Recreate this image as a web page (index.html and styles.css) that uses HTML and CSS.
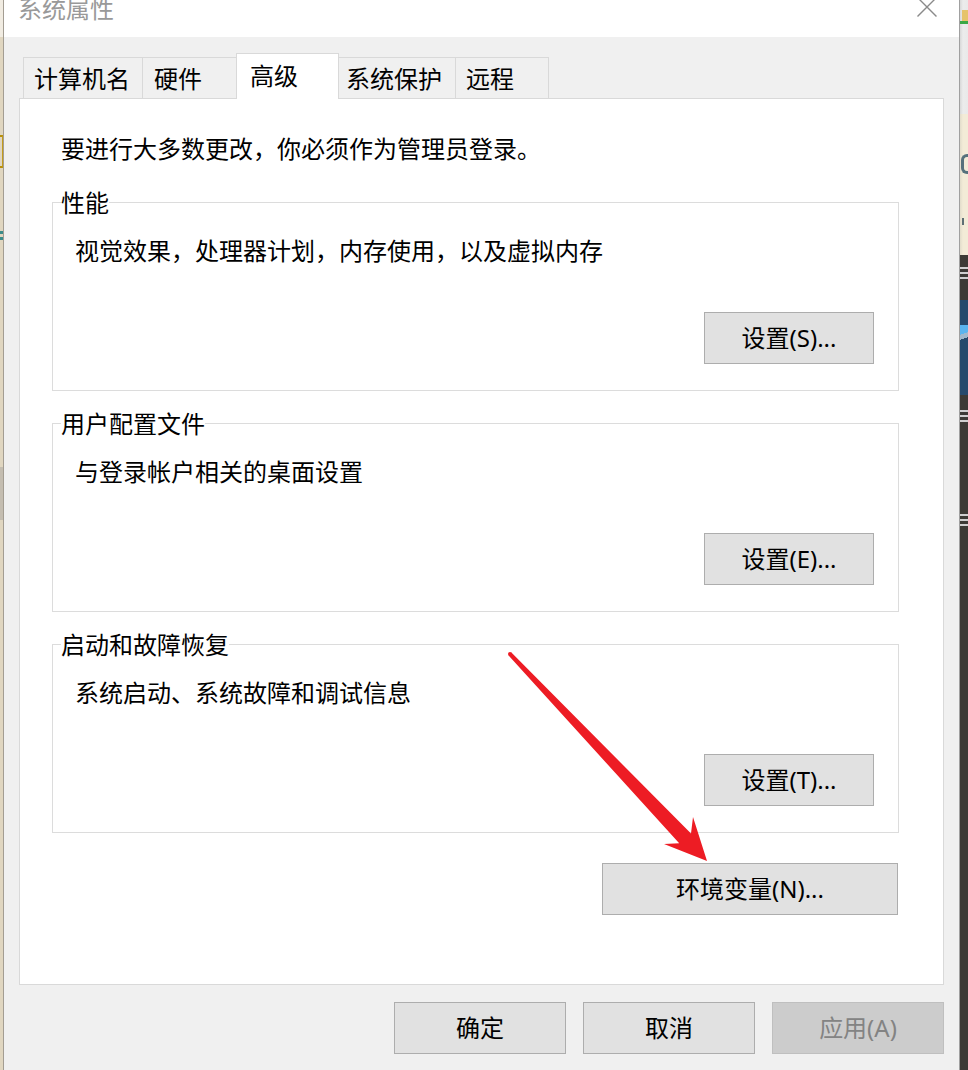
FILE: index.html
```html
<!DOCTYPE html>
<html lang="zh-CN">
<head>
<meta charset="utf-8">
<title>系统属性</title>
<link rel="stylesheet" href="styles.css">
</head>
<body>
<div class="screen">
  <div class="desk-left">
    <span class="mark mark-yellow"></span>
    <span class="mark mark-teal"></span>
    <span class="mark mark-gray"></span>
  </div>

  <div class="dialog">
    <div class="titlebar">
      <span class="title">系统属性</span>
      <svg class="close" viewBox="0 0 20 20" aria-hidden="true">
        <path d="M0.5 0.5 L19.5 19.5 M19.5 0.5 L0.5 19.5" stroke="#8a8a8a" stroke-width="1.4" fill="none"/>
      </svg>
    </div>

    <div class="body">
      <div class="tabs">
        <div class="tab tab-1">计算机名</div>
        <div class="tab tab-2">硬件</div>
        <div class="tab tab-active">高级</div>
        <div class="tab tab-4">系统保护</div>
        <div class="tab tab-5">远程</div>
      </div>

      <div class="panel">
        <p class="note">要进行大多数更改，你必须作为管理员登录。</p>

        <fieldset class="group">
          <legend>性能</legend>
          <div class="group-body">
            <p>视觉效果，处理器计划，内存使用，以及虚拟内存</p>
            <button class="btn">设置(S)...</button>
          </div>
        </fieldset>

        <fieldset class="group">
          <legend>用户配置文件</legend>
          <div class="group-body">
            <p>与登录帐户相关的桌面设置</p>
            <button class="btn">设置(E)...</button>
          </div>
        </fieldset>

        <fieldset class="group">
          <legend>启动和故障恢复</legend>
          <div class="group-body">
            <p>系统启动、系统故障和调试信息</p>
            <button class="btn">设置(T)...</button>
          </div>
        </fieldset>

        <button class="btn btn-env">环境变量(N)...</button>
      </div>

      <div class="actions">
        <button class="btn">确定</button>
        <button class="btn">取消</button>
        <button class="btn btn-disabled">应用(A)</button>
      </div>
    </div>
  </div>

  <div class="desk-right">
    <div class="strip-top">
      <svg class="folder" viewBox="0 0 8 16" aria-hidden="true">
        <rect x="2" y="0" width="6" height="12" fill="#e6c36a"/>
        <rect x="0" y="11" width="8" height="3" fill="#3aa845"/>
      </svg>
    </div>
    <div class="strip-beige">
      <span class="glyph glyph-e"></span>
      <span class="glyph glyph-tick"></span>
    </div>
    <div class="strip-dark">
      <span class="glyph glyph-light g1"></span>
      <span class="thumb"><span class="thumb-check"></span></span>
      <span class="glyph glyph-light g2"></span>
      <span class="glyph glyph-light g3"></span>
    </div>
  </div>

  <svg class="arrow" viewBox="0 0 968 1070" aria-hidden="true">
    <polygon fill="#ed1c24"
      points="511.4,652.6 691,833.5 693,817 707,861 664,844 679.2,843.3 508.6,655.4"/>
    <circle cx="510" cy="654" r="2" fill="#ed1c24"/>
  </svg>
</div>
</body>
</html>
```

FILE: styles.css
```css
* {
  box-sizing: border-box;
}

html,
body {
  margin: 0;
}

body {
  width: 968px;
  height: 1070px;
  overflow: hidden;
  font-family: "Noto Sans", "Noto Sans CJK SC", sans-serif;
  font-size: 24px;
  line-height: 24px;
  color: #000;
  background: #3c3a35;
}

.screen {
  position: relative;
  display: flex;
  width: 968px;
  height: 1070px;
}

/* desktop showing to the left of the window */
.desk-left {
  flex: none;
  width: 3px;
  display: flex;
  flex-direction: column;
  background: linear-gradient(to bottom, #f1ece2 0 37px, #e0d6c0 37px 100%);
}

.mark {
  display: block;
  width: 3px;
}

.mark-yellow {
  margin-top: 135px;
  height: 33px;
  border-top: 2px solid #b8900c;
  border-bottom: 2px solid #b8900c;
  border-right: 1px solid #c49c1c;
}

.mark-teal {
  margin-top: 60px;
  height: 16px;
  background: linear-gradient(to bottom, transparent 0 3px, #3b8c8a 3px 6px, transparent 6px 9px, #3b8c8a 9px 12px, transparent 12px);
}

.mark-gray {
  margin-top: 223px;
  height: 53px;
  background: #c4bdb0;
}

/* dialog window */
.dialog {
  flex: none;
  width: 957px;
  display: flex;
  flex-direction: column;
  background: #f0f0f0;
  border-left: 1px solid #a39d92;
  border-right: 1px solid #a0a0a0;
}

.titlebar {
  flex: none;
  height: 37px;
  display: flex;
  justify-content: space-between;
  align-items: flex-start;
  padding: 0 22px 0 14px;
  background: #fff;
}

.title {
  margin-top: -3px;
  color: #999;
}

.close {
  width: 20px;
  height: 20px;
  margin-top: -3px;
}

.body {
  padding: 16px 15px 0;
}

/* tab strip */
.tabs {
  display: flex;
  align-items: flex-end;
  height: 45px;
  padding-left: 4px;
}

.tab {
  flex: none;
  height: 41px;
  padding-top: 9px;
  white-space: nowrap;
  border-top: 1px solid #d9d9d9;
  border-left: 1px solid #d9d9d9;
}

.tab-1 {
  width: 119px;
  padding-left: 10px;
}

.tab-2 {
  width: 94px;
  padding-left: 11px;
}

.tab-active {
  position: relative;
  z-index: 1;
  width: 103px;
  height: 46px;
  margin-bottom: -1px;
  padding-top: 10px;
  padding-left: 13px;
  background: #fff;
  border-right: 1px solid #d9d9d9;
}

.tab-4 {
  width: 116px;
  padding-left: 7px;
  border-left: none;
}

.tab-5 {
  width: 94px;
  padding-left: 10px;
  border-right: 1px solid #d9d9d9;
}

/* tab page */
.panel {
  height: 887px;
  display: flex;
  flex-direction: column;
  padding: 38px 44px 0 32px;
  background: #fff;
  border: 1px solid #d9d9d9;
}

.note {
  margin: 0 0 29px 9px;
}

.group {
  margin: 0;
  padding: 0;
  min-width: 0;
  border: 1px solid #dcdcdc;
}

.group + .group {
  margin-top: 20px;
}

.group legend {
  margin-left: 8px;
  padding: 1px 0 0;
  line-height: 24px;
}

.group-body {
  display: flex;
  flex-direction: column;
  align-items: flex-start;
  padding: 24px 24px 26px 22px;
}

.group-body p {
  margin: 0;
}

/* push buttons */
.btn {
  height: 52px;
  padding: 0;
  font: inherit;
  line-height: 24px;
  color: #000;
  background: #e1e1e1;
  border: 1px solid #adadad;
  border-radius: 0;
}

.group .btn {
  align-self: flex-end;
  width: 170px;
  margin-top: 49px;
}

.btn-env {
  align-self: flex-end;
  width: 296px;
  margin: 30px 1px 0 0;
}

.actions {
  display: flex;
  justify-content: flex-end;
  gap: 17px;
  margin-top: 17px;
}

.actions .btn {
  width: 172px;
}

.btn-disabled {
  color: #838383;
  background: #cccccc;
  border-color: #bfbfbf;
}

/* window behind, on the right */
.desk-right {
  flex: none;
  width: 8px;
  display: flex;
  flex-direction: column;
}

.strip-top {
  flex: none;
  height: 114px;
  padding-top: 10px;
  background: linear-gradient(to right, #d8d8d8, #ececec 3px, #e9e9e9);
}

.folder {
  display: block;
  width: 8px;
  height: 16px;
}

.strip-beige {
  flex: none;
  height: 141px;
  display: flex;
  flex-direction: column;
  background: linear-gradient(to right, #e2dccb, #f3ebd7 3px);
}

.glyph {
  display: block;
}

.glyph-e {
  margin-top: 40px;
  margin-left: 1px;
  width: 7px;
  height: 20px;
  border: 3px solid #56717c;
  border-right: none;
  border-radius: 6px 0 0 6px;
}

.glyph-tick {
  margin-top: 44px;
  margin-left: 2px;
  width: 2px;
  height: 7px;
  background: #5e6f74;
}

.strip-dark {
  flex: 1;
  display: flex;
  flex-direction: column;
  background: #3c3a35;
}

.glyph-light {
  width: 8px;
  background: linear-gradient(to bottom, #cfcfcf 0 2px, transparent 2px 5px, #cfcfcf 5px 7px, transparent 7px 10px, #cfcfcf 10px 12px, transparent 12px);
}

.g1 {
  margin-top: 12px;
  height: 16px;
}

.g2 {
  margin-top: 15px;
  height: 16px;
}

.g3 {
  margin-top: 88px;
  height: 16px;
}

.thumb {
  display: flex;
  align-items: flex-start;
  margin-top: 17px;
  height: 95px;
  padding-top: 25px;
  background: #264a6c;
}

.thumb-check {
  display: block;
  width: 8px;
  height: 22px;
  background: linear-gradient(160deg, #5ab4ee 0 40%, #9fb8cc 40% 60%, transparent 60%);
}

/* annotation arrow drawn over the dialog */
.arrow {
  position: absolute;
  top: 0;
  left: 0;
  width: 968px;
  height: 1070px;
  pointer-events: none;
}
```
